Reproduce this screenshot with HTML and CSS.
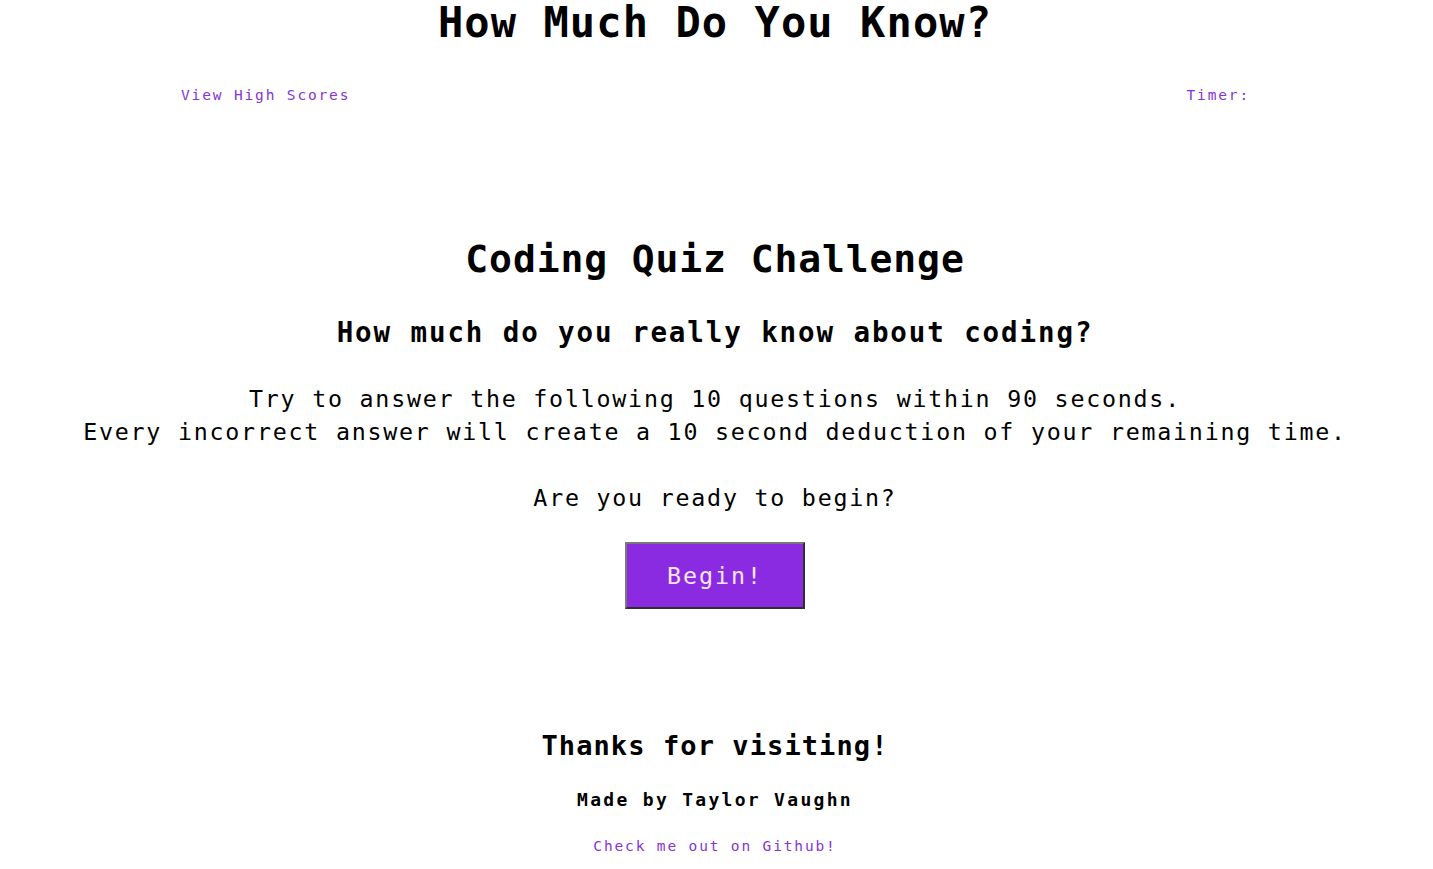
FILE: index.html
```html
<!DOCTYPE html>
<html lang="en">
<head>
<meta charset="utf-8">
<title>How Much Do You Know?</title>
<link rel="stylesheet" href="styles.css">
</head>
<body>
<header class="site-header">
  <h1 class="site-title">How Much Do You Know?</h1>
  <nav class="top-nav">
    <a class="nav-link" href="#">View High Scores</a>
    <span class="nav-link timer">Timer:</span>
  </nav>
</header>
<main class="intro">
  <h2 class="intro-title">Coding Quiz Challenge</h2>
  <h3 class="intro-sub">How much do you really know about coding?</h3>
  <p class="intro-text">Try to answer the following 10 questions within 90 seconds.<br>Every incorrect answer will create a 10 second deduction of your remaining time.</p>
  <p class="intro-ready">Are you ready to begin?</p>
  <button class="begin-btn" type="button">Begin!</button>
</main>
<footer class="site-footer">
  <h3 class="thanks">Thanks for visiting!</h3>
  <h4 class="made-by">Made by Taylor Vaughn</h4>
  <a class="nav-link github" href="#">Check me out on Github!</a>
</footer>
</body>
</html>
```
FILE: styles.css
```css
* { box-sizing: border-box; }
html, body {
  margin: 0;
  padding: 0;
  background: #ffffff;
}
body {
  font-family: "DejaVu Sans Mono", "Liberation Mono", monospace;
  color: #000;
  text-align: center;
  padding-right: 3px;
}
.site-header {
  display: flex;
  flex-direction: column;
}
.site-title {
  margin: 0;
  font-size: 42px;
  line-height: 46px;
  font-weight: bold;
  letter-spacing: 1.1px;
}
.top-nav {
  margin-top: 39px;
  display: flex;
  justify-content: space-between;
  padding: 0 180px 0 181px;
}
.nav-link {
  font-size: 14.5px;
  line-height: 20px;
  letter-spacing: 1.85px;
  color: #8534d8;
  text-decoration: none;
}
.intro {
  display: flex;
  flex-direction: column;
  align-items: center;
  margin-top: 131px;
}
.intro-title {
  margin: 0;
  font-size: 38px;
  line-height: 46px;
  font-weight: bold;
  letter-spacing: 0.9px;
}
.intro-sub {
  margin: 33px 0 0;
  font-size: 27.5px;
  line-height: 34px;
  font-weight: bold;
  letter-spacing: 1.9px;
}
.intro-text,
.intro-ready {
  margin: 33px 0 0;
  font-size: 23.3px;
  line-height: 33px;
  letter-spacing: 1.77px;
}
.begin-btn {
  margin-top: 28px;
  width: 180px;
  height: 67px;
  background: #8a2be2;
  color: #fbe4f6;
  font-family: "DejaVu Sans Mono", "Liberation Mono", monospace;
  font-size: 23.3px;
  letter-spacing: 2px;
  border: 2px solid;
  border-color: #777777 #2f2f2f #2f2f2f #777777;
  padding: 0;
  cursor: pointer;
}
.site-footer {
  display: flex;
  flex-direction: column;
  align-items: center;
  margin-top: 120px;
}
.thanks {
  margin: 0;
  font-size: 27px;
  line-height: 34px;
  font-weight: bold;
  letter-spacing: 1.1px;
}
.made-by {
  margin: 25px 0 0;
  font-size: 18px;
  line-height: 24px;
  font-weight: bold;
  letter-spacing: 2.3px;
}
.github {
  margin-top: 24px;
}
```
